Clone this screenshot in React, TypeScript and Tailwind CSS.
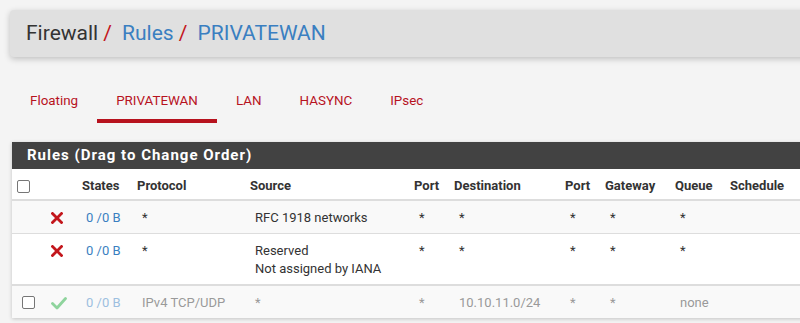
import React from 'react';

const cols =
  'grid grid-cols-[33px_32px_55px_113px_164px_40px_111px_40px_70px_55px_1fr]';

const XIcon = () => (
  <svg width="12" height="12" viewBox="0 0 12 12" className="block">
    <path d="M1.5 1.5 L10.5 10.5 M10.5 1.5 L1.5 10.5" stroke="#c3161c" strokeWidth="2.8" strokeLinecap="square" />
  </svg>
);

const CheckIcon = () => (
  <svg width="16" height="13" viewBox="0 0 16 13" className="block">
    <path d="M1.5 6.5 L6 11 L14.5 1.5" stroke="#8fd49d" strokeWidth="2.8" fill="none" strokeLinecap="round" strokeLinejoin="round" />
  </svg>
);

const Box = () => (
  <span className="block w-[13px] h-[13px] rounded-[2px] border border-[#767676] bg-white" />
);

const tabs = ['Floating', 'PRIVATEWAN', 'LAN', 'HASYNC', 'IPsec'];

interface IRow {
  icon: 'x' | 'check';
  check?: boolean;
  states: string;
  protocol: string;
  source: string[];
  port: string;
  dest: string;
  dport: string;
  gateway: string;
  queue: string;
  disabled?: boolean;
  bg: string;
  border: string;
}

const rows: IRow[] = [
  { icon: 'x', states: '0 /0 B', protocol: '*', source: ['RFC 1918 networks'], port: '*', dest: '*', dport: '*', gateway: '*', queue: '*', bg: 'bg-[#f9f9f9]', border: 'border-b border-[#dddddd]' },
  { icon: 'x', states: '0 /0 B', protocol: '*', source: ['Reserved', 'Not assigned by IANA'], port: '*', dest: '*', dport: '*', gateway: '*', queue: '*', bg: 'bg-white', border: 'border-b-2 border-[#dddddd]' },
  { icon: 'check', check: true, states: '0 /0 B', protocol: 'IPv4 TCP/UDP', source: ['*'], port: '*', dest: '10.10.11.0/24', dport: '*', gateway: '*', queue: 'none', disabled: true, bg: 'bg-[#f9f9f9]', border: '' },
];

const App: React.FC = () => {
  return (
    <div className="h-[323px] w-full overflow-hidden bg-[#f4f4f4] font-['Roboto',sans-serif]">
      <div className="w-[840px] pt-[10px]">
        <div className="ml-[10px] h-[47px] flex items-center pl-[16px] bg-[#e0e0e0] rounded-l-[4px] shadow-[0_2px_6px_rgba(0,0,0,0.22)] text-[21px]">
          <span className="text-[#333333]">Firewall</span>
          <span className="px-[5px] text-[#c3161c]">/&nbsp;</span>
          <span className="text-[#3a7fc1]">Rules</span>
          <span className="px-[5px] text-[#c3161c]">/&nbsp;</span>
          <span className="text-[#3a7fc1]">PRIVATEWAN</span>
        </div>

        <div className="flex ml-[11px] mt-[23px] text-[13.4px] text-[#b7121e]">
          {tabs.map((t) => (
            <div
              key={t}
              className={
                t === 'PRIVATEWAN'
                  ? 'px-[19px] h-[43px] pt-[11px] border-b-4 border-[#b7121e]'
                  : 'px-[19px] h-[43px] pt-[11px]'
              }
            >
              {t}
            </div>
          ))}
        </div>

        <div className="ml-[12px] mt-[19px] bg-white shadow-[0_1px_4px_rgba(0,0,0,0.2)]">
          <div className="h-[27px] flex items-center pl-[15px] bg-[#424242] text-white font-bold text-[15px] tracking-[1px]">
            Rules (Drag to Change Order)
          </div>
          <div className={`${cols} h-[32px] pt-[4px] items-center bg-white border-b-2 border-[#dddddd] text-[13px] font-bold text-[#333333]`}>
            <div className="pl-[5px]"><Box /></div>
            <div />
            <div className="pl-[5px]">States</div>
            <div className="pl-[5px]">Protocol</div>
            <div className="pl-[5px]">Source</div>
            <div className="pl-[5px]">Port</div>
            <div className="pl-[5px]">Destination</div>
            <div className="pl-[5px]">Port</div>
            <div className="pl-[5px]">Gateway</div>
            <div className="pl-[5px]">Queue</div>
            <div className="pl-[5px]">Schedule</div>
          </div>
          {rows.map((r, i) => (
            <div
              key={i}
              className={`${cols} pt-[8px] pb-[6px] leading-[18px] text-[13px] ${r.bg} ${r.border} ${r.disabled ? 'text-[#9a9a9a]' : 'text-[#333333]'}`}
            >
              <div className="pl-[10px] pt-[2px]">{r.check && <Box />}</div>
              <div className="pl-[6px] pt-[3px]">{r.icon === 'x' ? <XIcon /> : <CheckIcon />}</div>
              <div className={`pl-[9px] ${r.disabled ? 'text-[#9dbfe0]' : 'text-[#3a7fc1]'}`}>{r.states}</div>
              <div className="pl-[10px]">{r.protocol}</div>
              <div className="pl-[10px]">
                {r.source.map((s) => (
                  <div key={s}>{s}</div>
                ))}
              </div>
              <div className="pl-[10px]">{r.port}</div>
              <div className="pl-[10px]">{r.dest}</div>
              <div className="pl-[10px]">{r.dport}</div>
              <div className="pl-[10px]">{r.gateway}</div>
              <div className="pl-[10px]">{r.queue}</div>
              <div />
            </div>
          ))}
        </div>
      </div>
    </div>
  );
};

export default App;
